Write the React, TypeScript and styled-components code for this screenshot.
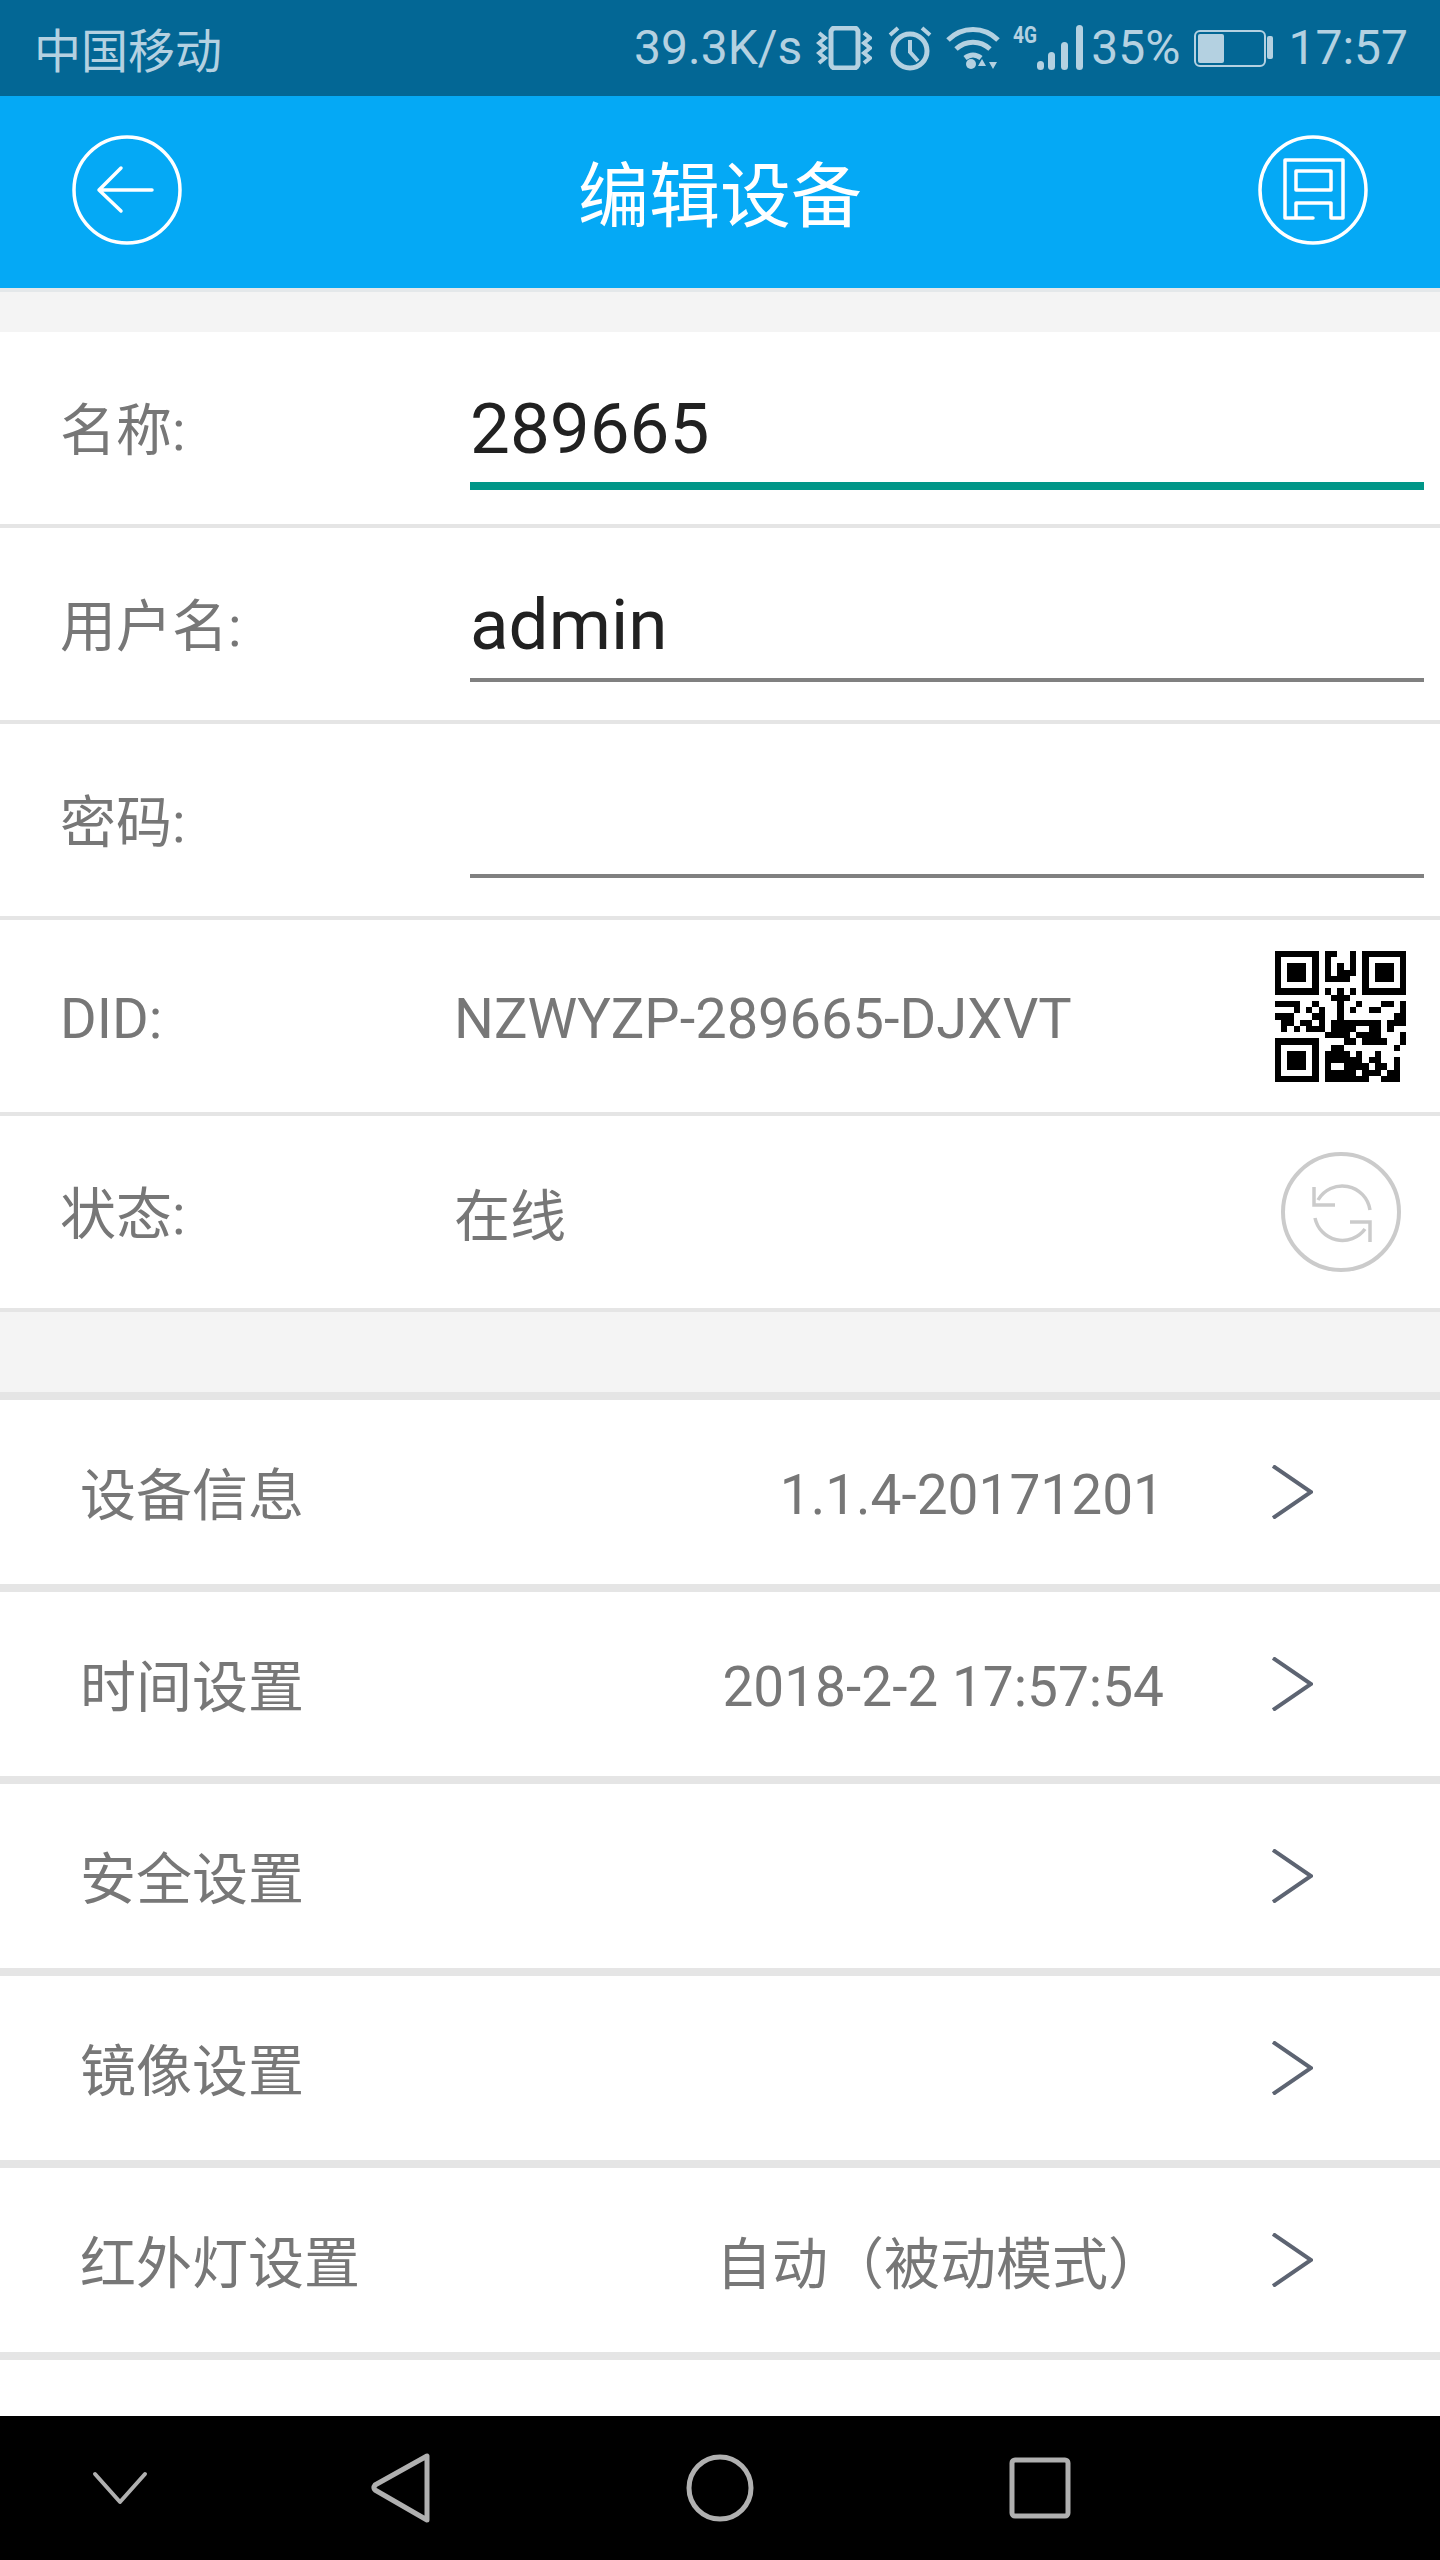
import React from 'react';
import styled, { createGlobalStyle } from 'styled-components';

const GlobalStyle = createGlobalStyle`
  html, body {
    margin: 0;
    padding: 0;
    background: #fff;
  }
  * {
    box-sizing: border-box;
  }
`;

const Page = styled.div`
  width: 1440px;
  height: 2560px;
  display: flex;
  flex-direction: column;
  background: #fff;
  font-family: Roboto, 'Noto Sans CJK SC', sans-serif;
  overflow: hidden;
`;

const StatusBar = styled.div`
  height: 96px;
  flex: none;
  display: flex;
  align-items: center;
  justify-content: space-between;
  padding: 0 32px 0 34px;
  background: #036795;
  color: #b4d1e1;
  font-size: 48px;
`;

const Carrier = styled.span`
  font-family: 'Noto Sans CJK SC', sans-serif;
  font-size: 47px;
  line-height: 90px;
`;

const StatusGroup = styled.div`
  display: flex;
  align-items: center;
`;

const StatusText = styled.span<{ $left?: number }>`
  margin-left: ${(p) => p.$left ?? 0}px;
  line-height: 96px;
`;

const StatusIcon = styled.svg<{ $left: number }>`
  display: block;
  flex: none;
  margin-left: ${(p) => p.$left}px;
`;

const Header = styled.header`
  height: 196px;
  flex: none;
  display: flex;
  align-items: center;
  justify-content: space-between;
  padding: 0 72px 4px 72px;
  background: #05a9f5;
  border-bottom: 4px solid #e4e8ea;
  background-clip: padding-box;
`;

const Title = styled.h1`
  margin: 0;
  font-family: 'Noto Sans CJK SC', sans-serif;
  font-size: 71px;
  font-weight: 400;
  color: #fff;
`;

const HeaderIcon = styled.svg`
  display: block;
  width: 110px;
  height: 110px;
  fill: none;
  stroke: #fff;
  stroke-width: 3.5;
  stroke-linecap: round;
  stroke-linejoin: round;
`;

const TopSpacer = styled.div`
  height: 40px;
  flex: none;
  background: #f4f4f4;
`;

const GapSpacer = styled.div`
  height: 80px;
  flex: none;
  background: #f4f4f4;
`;

const FormRow = styled.div`
  height: 196px;
  flex: none;
  display: flex;
  align-items: center;
  padding: 0 16px 0 60px;
  border-bottom: 4px solid #e5e5e5;
`;

const FieldLabel = styled.label<{ $latin?: boolean }>`
  width: 394px;
  flex: none;
  padding: ${(p) => (p.$latin ? '6px 0 0' : '0 0 6px')};
  font-family: Roboto, 'Noto Sans CJK SC', sans-serif;
  font-size: 56px;
  color: #777;
`;

const FieldInput = styled.input<{ $active?: boolean }>`
  display: block;
  width: 954px;
  height: ${(p) => (p.$active ? 108 : 104)}px;
  margin: 0 0 ${(p) => (p.$active ? 34 : 38)}px 16px;
  align-self: flex-end;
  padding: 0 0 8px;
  border: 0;
  border-bottom: ${(p) => (p.$active ? '8px solid #009688' : '4px solid #808080')};
  border-radius: 0;
  outline: 0;
  background: transparent;
  font-family: Roboto, sans-serif;
  font-size: 71px;
  color: #212121;
`;

const FieldValue = styled.span<{ $latin?: boolean }>`
  flex: 1;
  padding: ${(p) => (p.$latin ? '6px 0 0' : '0 0 2px')};
  font-family: Roboto, 'Noto Sans CJK SC', sans-serif;
  font-size: 56px;
  color: #777;
`;

const QrCode = styled.svg`
  display: block;
  flex: none;
  width: 131px;
  height: 131px;
  margin-right: 18px;
`;

const RefreshIcon = styled.svg`
  display: block;
  flex: none;
  width: 120px;
  height: 120px;
  margin-right: 23px;
  fill: none;
  stroke: #cbcbcb;
  stroke-width: 4;
`;

const MenuRow = styled.div`
  height: 192px;
  flex: none;
  display: flex;
  align-items: center;
  padding: 0 127px 0 80px;
  border-bottom: 8px solid #e5e5e5;
  color: #777;
  font-size: 56px;
  font-family: Roboto, 'Noto Sans CJK SC', sans-serif;
`;

const FirstMenuBorder = styled.div`
  height: 8px;
  flex: none;
  background: #e5e5e5;
`;

const MenuLabel = styled.span`
  flex: 1;
  padding-bottom: 3px;
`;

const MenuValue = styled.span<{ $latin?: boolean }>`
  margin-right: 108px;
  padding: ${(p) => (p.$latin ? '6px 0 0' : '0 0 2px')};
  font-size: ${(p) => (p.$latin ? 55 : 56)}px;
  text-spacing-trim: space-all;
`;

const Chevron = styled.svg`
  display: block;
  flex: none;
  width: 41px;
  height: 54px;
  fill: none;
  stroke: #5d6472;
  stroke-width: 4;
`;

const PageFill = styled.div`
  flex: 1;
`;

const NavBar = styled.nav`
  height: 144px;
  flex: none;
  display: grid;
  grid-template-columns: 240px 320px 320px 320px;
  align-items: center;
  justify-items: center;
  background: #000;
`;

const NavIcon = styled.svg`
  display: block;
  width: 72px;
  height: 72px;
  fill: none;
  stroke: #b0b0b0;
  stroke-width: 5;
  stroke-linejoin: round;
  stroke-linecap: round;
`;

const qrRows = [
  '111111101100101111111',
  '100000101000101000001',
  '101110101010101011101',
  '101110101011101011101',
  '101110101111001011101',
  '100000100000001000001',
  '111111101010101111111',
  '000000000111000000000',
  '111100100010010001101',
  '000101010010100110001',
  '111000110010000000011',
  '011011010111111110111',
  '010101110111100110100',
  '000000001111011110001',
  '111111100001101111001',
  '100000100110000000010',
  '101110101111010010000',
  '101110101111110110010',
  '101110101001111011010',
  '100000101111101110110',
  '111111101111111001110',
];

const menuItems = [
  { label: '设备信息', value: '1.1.4-20171201', latin: true },
  { label: '时间设置', value: '2018-2-2 17:57:54', latin: true },
  { label: '安全设置', value: '' },
  { label: '镜像设置', value: '' },
  { label: '红外灯设置', value: '自动（被动模式）' },
];

const App = () => {
  return (
    <Page>
      <GlobalStyle />
      <StatusBar>
        <Carrier>中国移动</Carrier>
        <StatusGroup>
          <StatusText>39.3K/s</StatusText>
          <StatusIcon $left={14} width="56" height="44" viewBox="0 0 56 44" fill="none" stroke="#b4d1e1">
            <rect x="15" y="2" width="27" height="40" rx="4" strokeWidth="5" />
            <path d="M3 6l6 5-6 5 6 5-6 5 6 5-6 5M48 6l6 5-6 5 6 5-6 5 6 5-6 5" strokeWidth="4" transform="translate(0 1)" />
          </StatusIcon>
          <StatusIcon $left={15} width="46" height="46" viewBox="0 0 46 46" fill="none" stroke="#b4d1e1">
            <circle cx="23" cy="26" r="17" strokeWidth="5" />
            <path d="M23 15v12l8 9M3 10l8-7M43 10l-8-7" strokeWidth="4" />
          </StatusIcon>
          <StatusIcon $left={13} width="54" height="44" viewBox="0 0 54 44" fill="none" stroke="#b4d1e1">
            <path d="M2 14c14-14 36-14 50 0M10 23c10-9 24-9 34 0M19 32c5-4 11-4 16 0" strokeWidth="5" />
            <circle cx="25" cy="38" r="5" fill="#b4d1e1" stroke="none" />
            <path d="M36 33l-4 7h8zM47 43l-4-7h8z" fill="#b4d1e1" stroke="none" />
          </StatusIcon>
          <StatusIcon $left={13} width="70" height="46" viewBox="0 0 70 46">
            <text x="0" y="18" fontFamily="Roboto, sans-serif" fontWeight="700" fontSize="24" fill="#b4d1e1" textLength="24" lengthAdjust="spacingAndGlyphs">4G</text>
            <rect x="24" y="36" width="7" height="9" rx="3.5" fill="#b4d1e1" />
            <rect x="35" y="27" width="7" height="18" rx="3.5" fill="#b4d1e1" />
            <rect x="48" y="17" width="7" height="28" rx="3.5" fill="#b4d1e1" />
            <rect x="63" y="0" width="7" height="45" rx="3.5" fill="#b4d1e1" />
          </StatusIcon>
          <StatusText $left={8}>35%</StatusText>
          <StatusIcon $left={14} width="79" height="37" viewBox="0 0 79 37">
            <rect x="1" y="1" width="70" height="35" rx="5" fill="none" stroke="#b4d1e1" strokeWidth="2" />
            <rect x="4" y="4" width="26" height="29" rx="2" fill="#b4d1e1" />
            <rect x="73" y="6" width="6" height="23" rx="2" fill="#b4d1e1" />
          </StatusIcon>
          <StatusText $left={15}>17:57</StatusText>
        </StatusGroup>
      </StatusBar>

      <Header>
        <HeaderIcon viewBox="0 0 110 110">
          <circle cx="55" cy="55" r="53" />
          <path d="M27 55h53M49 33L27 55l22 21" />
        </HeaderIcon>
        <Title>编辑设备</Title>
        <HeaderIcon viewBox="0 0 110 110">
          <circle cx="55" cy="55" r="53" />
          <path d="M55 83H27V25h58v58H73V68H38v15" />
          <rect x="38" y="36" width="35" height="19" />
        </HeaderIcon>
      </Header>
      <TopSpacer />

      <FormRow>
        <FieldLabel>名称:</FieldLabel>
        <FieldInput $active defaultValue="289665" />
      </FormRow>
      <FormRow>
        <FieldLabel>用户名:</FieldLabel>
        <FieldInput defaultValue="admin" />
      </FormRow>
      <FormRow>
        <FieldLabel>密码:</FieldLabel>
        <FieldInput type="password" />
      </FormRow>
      <FormRow>
        <FieldLabel $latin>DID:</FieldLabel>
        <FieldValue $latin>NZWYZP-289665-DJXVT</FieldValue>
        <QrCode viewBox="0 0 21 21" shapeRendering="crispEdges">
          {qrRows.map((row, y) =>
            row.split('').map((cell, x) =>
              cell === '1' ? <rect key={`${x}-${y}`} x={x} y={y} width="1" height="1" fill="#000" /> : null
            )
          )}
        </QrCode>
      </FormRow>
      <FormRow>
        <FieldLabel>状态:</FieldLabel>
        <FieldValue>在线</FieldValue>
        <RefreshIcon viewBox="0 0 120 120">
          <circle cx="60" cy="60" r="58" />
          <path d="M33 35v18h21M37 48A28 28 0 0 1 89 58" strokeWidth="3.5" />
          <path d="M89 90V70H69M34 66A28 28 0 0 0 84 77" strokeWidth="3.5" />
        </RefreshIcon>
      </FormRow>
      <GapSpacer />
      <FirstMenuBorder />

      {menuItems.map((item) => (
        <MenuRow key={item.label}>
          <MenuLabel>{item.label}</MenuLabel>
          {item.value && <MenuValue $latin={item.latin}>{item.value}</MenuValue>}
          <Chevron viewBox="0 0 41 54">
            <path d="M1 1l38 26L1 53" />
          </Chevron>
        </MenuRow>
      ))}
      <PageFill />

      <NavBar>
        <NavIcon viewBox="0 0 72 72">
          <path d="M11 22l25 28 25-28" strokeWidth="4" />
        </NavIcon>
        <NavIcon viewBox="0 0 72 72">
          <path d="M63 4v64L11 38a4 4 0 0 1 0-5z" />
        </NavIcon>
        <NavIcon viewBox="0 0 72 72">
          <circle cx="36" cy="36" r="31" />
        </NavIcon>
        <NavIcon viewBox="0 0 72 72">
          <rect x="8" y="8" width="56" height="56" rx="3" />
        </NavIcon>
      </NavBar>
    </Page>
  );
};

export default App;
